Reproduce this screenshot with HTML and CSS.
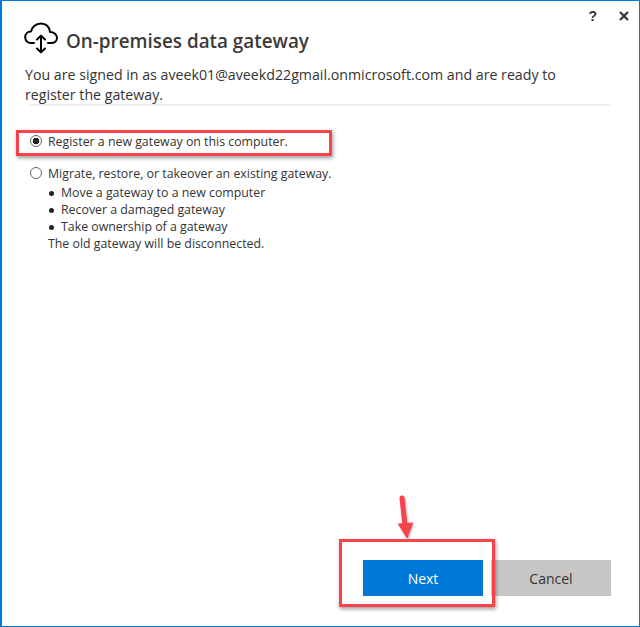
FILE: index.html
```html
<!DOCTYPE html>
<html lang="en">
<head>
<meta charset="utf-8">
<title>On-premises data gateway</title>
<link rel="stylesheet" href="styles.css">
</head>
<body>
<div class="window">
  <div class="controls">
    <span class="help">?</span>
    <svg class="close" width="10" height="10" viewBox="0 0 10 10"><path d="M1 1 9 9M9 1 1 9" stroke="#333" stroke-width="2.2" fill="none"/></svg>
  </div>
  <header class="title-row">
    <svg class="cloud" width="34" height="32" viewBox="0 0 34 32" fill="none" stroke="#000" stroke-width="2" stroke-linecap="round" stroke-linejoin="round">
      <path d="M10 21H7C3.4 21 1.2 18.2 1.2 15.2 1.2 12 3.6 9.6 7 9.6 8 5 12 1.4 17 1.4 22 1.4 25.6 5 26 10 30 10 33 12.6 33 16 33 19 30.6 21 27 21H24"/>
      <path d="M17 14V30M13 17.5 17 13.6 21 17.5M13 26.5 17 30.4 21 26.5"/>
    </svg>
    <h1 class="title">On-premises data gateway</h1>
  </header>
  <p class="intro">You are signed in as aveek01@aveekd22gmail.onmicrosoft.com and are ready to register the gateway.</p>
  <div class="rule"></div>
  <div class="options">
    <div class="option first">
      <span class="radio checked"></span>
      <span>Register a new gateway on this computer.</span>
    </div>
    <div class="option second">
      <span class="radio"></span>
      <div>
        <div>Migrate, restore, or takeover an existing gateway.</div>
        <ul class="bullets">
          <li>Move a gateway to a new computer</li>
          <li>Recover a damaged gateway</li>
          <li>Take ownership of a gateway</li>
        </ul>
        <div>The old gateway will be disconnected.</div>
      </div>
    </div>
  </div>
  <footer class="actions">
    <button class="btn primary">Next</button>
    <button class="btn secondary">Cancel</button>
  </footer>
  <div class="mark mark-radio"></div>
  <div class="mark mark-next"></div>
  <svg class="arrow" width="26" height="48" viewBox="0 0 26 48">
    <path d="M12 3 15 31" stroke="#f8434a" stroke-width="5" stroke-linecap="round" fill="none"/>
    <path d="M8.5 29 22.5 28 17 43Z" fill="#f8434a" stroke="#f8434a" stroke-linejoin="round"/>
  </svg>
</div>
</body>
</html>
```
FILE: styles.css
```css
html, body {
  margin: 0;
  padding: 0;
  background: #fff;
}
.window {
  position: relative;
  box-sizing: border-box;
  width: 640px;
  height: 627px;
  border-style: solid;
  border-color: #0078d7;
  border-width: 1px 1px 1px 2px;
  display: flex;
  flex-direction: column;
  font-family: "Open Sans", "Noto Sans", sans-serif;
  color: #333;
  background: #fff;
  overflow: hidden;
}
.controls {
  position: absolute;
  top: 6px;
  right: 10px;
  display: flex;
  align-items: center;
  gap: 22px;
}
.help {
  font: bold 14px/18px "Liberation Sans", sans-serif;
  color: #333;
}
.title-row {
  display: flex;
  align-items: center;
  gap: 8px;
  margin: 21px 0 0 22px;
  height: 32px;
}
.cloud { flex: none; }
.title {
  margin: 5px 0 0;
  font-size: 18.85px;
  line-height: 26px;
  font-weight: 600;
  color: #3b3a39;
}
.intro {
  margin: 11px 0 0 23px;
  width: 560px;
  font-size: 14.2px;
  line-height: 20px;
  color: #333;
}
.rule {
  margin: -1px 28px 0 27px;
  height: 2px;
  background: #ededed;
}
.options {
  margin: 27px 0 0 28px;
  font-size: 12.35px;
  line-height: 17px;
  color: #333;
}
.option {
  display: flex;
  gap: 6px;
}
.second { margin-top: 15px; }
.radio {
  flex: none;
  box-sizing: border-box;
  width: 12px;
  height: 12px;
  margin-top: 2px;
  border: 1px solid #666;
  border-radius: 50%;
  background: #fff;
}
.radio.checked {
  background: radial-gradient(circle, #222 0 3px, #fff 3.6px);
}
.bullets {
  margin: 2px 0 0;
  padding: 0 0 0 1px;
  list-style: none;
}
.bullets li::before {
  content: "";
  display: inline-block;
  vertical-align: middle;
  width: 5px;
  height: 5px;
  margin: -1px 7px 0 0;
  border-radius: 50%;
  background: #222;
}
.actions {
  margin-top: auto;
  margin-bottom: 30px;
  padding-right: 28px;
  display: flex;
  justify-content: flex-end;
}
.btn {
  height: 36px;
  border: 0;
  padding: 0;
  font: 14px "Open Sans", "Noto Sans", sans-serif;
}
.primary {
  width: 120px;
  background: #0078d7;
  color: #fff;
  margin-right: 8px;
}
.secondary {
  width: 120px;
  background: #c8c6c4;
  color: #333;
}
.mark {
  position: absolute;
  box-sizing: border-box;
  border: 3px solid #f8434a;
  box-shadow: 1px 2px 4px rgba(0, 0, 0, 0.4);
}
.mark-radio {
  left: 14px;
  top: 129px;
  width: 316px;
  height: 26px;
}
.mark-next {
  left: 337px;
  top: 538px;
  width: 156px;
  height: 68px;
}
.arrow {
  position: absolute;
  left: 388px;
  top: 494px;
  filter: drop-shadow(1px 1px 1px rgba(0, 0, 0, 0.3));
}
```
